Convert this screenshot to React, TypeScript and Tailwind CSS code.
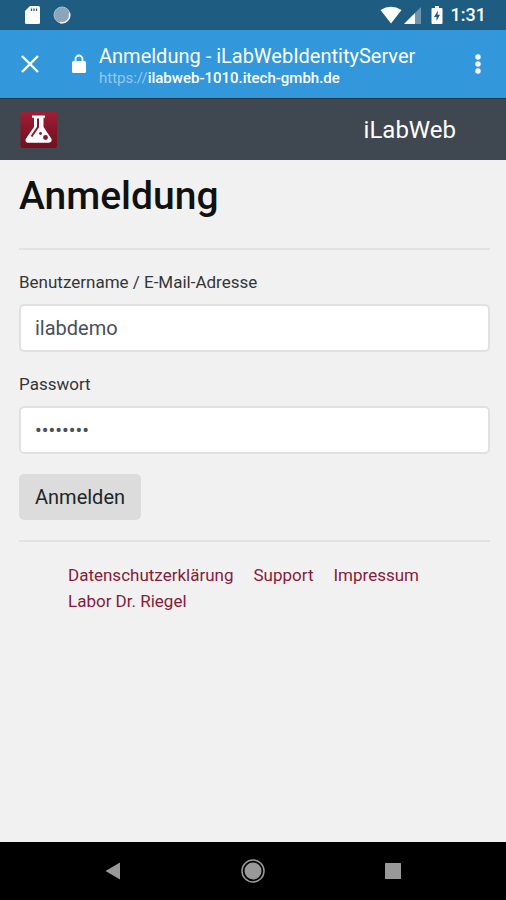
import { useState } from "react";

function StatusBar() {
  return (
    <div className="flex h-[30px] items-center justify-between bg-[#1f5c82] pr-5 pl-6 text-white">
      <div className="flex items-center gap-3">
        <svg className="h-5 w-4" viewBox="0 0 16 20" aria-hidden="true">
          <path d="M6 1h8.500a1.500 1.500 0 0 1 1.500 1.500v15a1.500 1.500 0 0 1-1.500 1.500H2.500A1.500 1.500 0 0 1 1 17.500V6z" fill="#fff" />
          <path d="M7.500 3.500v2.500M10 3.500v2.500M12.500 3.500v2.500" stroke="#1f5c82" strokeWidth="1.300" />
        </svg>
        <svg className="h-5 w-5" viewBox="0 0 20 20" aria-hidden="true">
          <circle cx="10" cy="10" r="8" fill="#8ba5bb" stroke="#a9bdcd" strokeWidth="1" />
          <path d="M17.500 8.500A7.700 7.700 0 0 1 8.500 17.600" fill="none" stroke="#e8eff5" strokeWidth="1.600" strokeLinecap="round" />
        </svg>
      </div>
      <div className="flex items-center">
        <svg className="h-5 w-6" viewBox="0 0 24 20" aria-hidden="true">
          <path d="M1.500 5Q12-1.500 22.500 5L12 18.500z" fill="#fff" />
        </svg>
        <svg className="h-5 w-5" viewBox="0 0 20 20" aria-hidden="true">
          <path d="M1 19L18 2v17z" fill="#6f94ae" />
          <path d="M1 19L12 8v11z" fill="#fff" />
        </svg>
        <svg className="ml-2 h-5 w-3" viewBox="0 0 12 20" aria-hidden="true">
          <path d="M4 1h4v2h2.500a1 1 0 0 1 1 1v14a1 1 0 0 1-1 1h-9a1 1 0 0 1-1-1V4a1 1 0 0 1 1-1H4z" fill="#fff" />
          <path d="M7 5.500L3 12h2.500v4L9 9.800H6.500z" fill="#1f5c82" />
        </svg>
        <span className="ml-2 text-lg leading-6 font-medium">1:31</span>
      </div>
    </div>
  );
}

function BrowserBar() {
  return (
    <div className="flex h-[69px] items-center border-b border-[#26343c] bg-[#3297db] px-4 text-white">
      <button type="button" aria-label="Schließen" className="flex h-8 w-7 items-center justify-center">
        <svg className="h-5 w-5" viewBox="0 0 20 20" aria-hidden="true">
          <path d="M2 2l16 16M18 2L2 18" stroke="#fff" strokeWidth="2.400" />
        </svg>
      </button>
      <svg className="ml-[27px] h-5 w-4" viewBox="0 0 16 20" aria-hidden="true">
        <rect x="1" y="7" width="14" height="12" rx="1.500" fill="#fff" />
        <path d="M4.500 8V5a3.500 3.500 0 0 1 7 0v3" fill="none" stroke="#fff" strokeWidth="1.800" />
      </svg>
      <div className="ml-3 min-w-0 flex-1 pt-1">
        <div className="truncate text-xl leading-6">Anmeldung - iLabWebIdentityServer</div>
        <div className="truncate text-[15px] leading-5">
          <span className="text-[#94c9ef]">https://</span>
          <span className="font-medium">ilabweb-1010.itech-gmbh.de</span>
        </div>
      </div>
      <button type="button" aria-label="Menü" className="flex h-8 w-6 items-center justify-center">
        <svg className="h-5 w-5" viewBox="0 0 20 20" aria-hidden="true">
          <circle cx="10" cy="3" r="2.700" fill="#fff" />
          <circle cx="10" cy="10" r="2.700" fill="#fff" />
          <circle cx="10" cy="17" r="2.700" fill="#fff" />
        </svg>
      </button>
    </div>
  );
}

function SiteHeader() {
  return (
    <header className="flex h-[61px] items-center justify-between bg-[#3f4751] pr-[50px] pl-5 text-white">
      <svg className="h-[38px] w-[38px]" viewBox="0 0 38 38" role="img" aria-label="iLabWeb Logo">
        <defs>
          <linearGradient id="logo" x1="0" y1="0" x2="0" y2="1">
            <stop offset="0" stopColor="#a11f36" />
            <stop offset="0.500" stopColor="#861628" />
            <stop offset="1" stopColor="#74101f" />
          </linearGradient>
        </defs>
        <rect x="0.500" y="0.500" width="36.500" height="36.500" rx="2.500" fill="url(#logo)" />
        <path d="M12 4.500h13v2.300h-1.500v9.200l7.800 11.500c1 2.200-.2 4.200-2.500 4.200H8.500c-2.500 0-3.700-2-2.500-4.300L14 16V6.800h-2z" fill="#fff" />
        <path d="M18 7.500v8.500L11.500 25.500" fill="none" stroke="#861628" strokeWidth="2" />
        <circle cx="20.500" cy="22.500" r="1.400" fill="#861628" />
        <circle cx="25.500" cy="26.500" r="2.400" fill="#861628" />
      </svg>
      <span className="text-2xl">iLabWeb</span>
    </header>
  );
}

function Field({ id, label, type, initial }: { id: string; label: string; type: string; initial: string }) {
  const [value, setValue] = useState(initial);
  return (
    <div>
      <label htmlFor={id} className="block text-[17px] leading-6">
        {label}
      </label>
      <input
        id={id}
        type={type}
        value={value}
        onChange={(e) => setValue(e.target.value)}
        className="mt-2.5 block h-12 w-full rounded-[5px] border-2 border-[#e0e1e2] bg-white px-3.5 text-xl text-[#495057]"
      />
    </div>
  );
}

function LoginForm() {
  return (
    <form onSubmit={(e) => e.preventDefault()} className="mt-6 flex flex-col items-stretch gap-5 border-y-2 border-[#e2e2e2] py-5">
      <Field id="user" label="Benutzername / E-Mail-Adresse" type="text" initial="ilabdemo" />
      <Field id="password" label="Passwort" type="password" initial="ilabdemo" />
      <button type="submit" className="h-[46px] self-start rounded-[5px] bg-[#dcdcdc] px-4 text-xl text-[#212529]">
        Anmelden
      </button>
    </form>
  );
}

function Footer() {
  const links = ["Datenschutzerklärung", "Support", "Impressum", "Labor Dr. Riegel"];
  return (
    <footer className="mt-5 flex flex-wrap gap-x-5 px-[49px] text-[17px] leading-[26px] text-[#861b3b]">
      {links.map((link) => (
        <a key={link} href="#">
          {link}
        </a>
      ))}
    </footer>
  );
}

function NavigationBar() {
  return (
    <nav className="flex h-[58px] items-center justify-center gap-[116px] bg-black">
      <button type="button" aria-label="Zurück">
        <svg className="h-6 w-6" viewBox="0 0 24 24" aria-hidden="true">
          <path d="M4.500 12L19 3.500v17z" fill="#999" />
        </svg>
      </button>
      <button type="button" aria-label="Startseite">
        <svg className="h-6 w-6" viewBox="0 0 24 24" aria-hidden="true">
          <circle cx="12" cy="12" r="11" fill="none" stroke="#999" strokeWidth="1.500" />
          <circle cx="12" cy="12" r="8.500" fill="#999" />
        </svg>
      </button>
      <button type="button" aria-label="Übersicht">
        <svg className="h-6 w-6" viewBox="0 0 24 24" aria-hidden="true">
          <rect x="4" y="4" width="16" height="16" rx="0.500" fill="#999" />
        </svg>
      </button>
    </nav>
  );
}

export default function App() {
  return (
    <div className="flex min-h-screen flex-col bg-[#f1f1f1] font-[Roboto,sans-serif] text-[#333639]">
      <StatusBar />
      <BrowserBar />
      <SiteHeader />
      <main className="flex-1 pt-2 pr-4 pl-[19px]">
        <h1 className="text-[39px] leading-[56px] font-medium text-[#111]">Anmeldung</h1>
        <LoginForm />
        <Footer />
      </main>
      <NavigationBar />
    </div>
  );
}
